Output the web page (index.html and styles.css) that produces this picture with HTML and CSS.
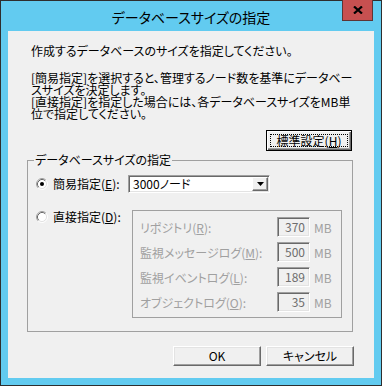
FILE: index.html
```html
<!DOCTYPE html>
<html lang="ja">
<head>
	<meta charset="UTF-8">
	<title>データベースサイズの指定</title>
	<link rel="stylesheet" href="styles.css">
</head>
<body>
	<div class="window">
		<div class="titlebar">
			<span class="title">データベースサイズの指定</span>
			<button class="close-btn">
				<svg width="10" height="8" viewBox="0 0 10 8"><path d="M1 0.5L9 7.5M9 0.5L1 7.5" stroke="#000" stroke-width="2.2"/></svg>
			</button>
		</div>
		<div class="client">
			<p class="msg msg-first">作成するデータベースのサイズを指定してください。</p>
			<p class="msg">[簡易指定]を選択すると、管理するノード数を基準にデータベー<br>スサイズを決定します。<br>[直接指定]を指定した場合には、各データベースサイズをMB単<br>位で指定してください。</p>
			<button class="btn btn-default"><span class="focus-rect">標準設定(<u>H</u>)</span></button>

			<fieldset class="group">
				<legend>データベースサイズの指定</legend>
				<div class="opt-row opt-simple">
					<label class="radio">
						<svg width="12" height="12" viewBox="0 0 12 12">
							<circle cx="6" cy="6" r="4.5" fill="#fff"/>
							<path d="M2.11 9.89A5.5 5.5 0 0 1 9.89 2.11" fill="none" stroke="#a0a0a0"/>
							<path d="M9.89 2.11A5.5 5.5 0 0 1 2.11 9.89" fill="none" stroke="#fff"/>
							<path d="M2.82 9.18A4.5 4.5 0 0 1 9.18 2.82" fill="none" stroke="#696969"/>
							<path d="M9.18 2.82A4.5 4.5 0 0 1 2.82 9.18" fill="none" stroke="#e3e3e3"/>
							<circle cx="6" cy="6" r="2" fill="#000"/>
						</svg>
						<span>簡易指定(<u>E</u>):</span>
					</label>
					<div class="combo">
						<span class="combo-value">3000ノード</span>
						<span class="combo-btn"><svg width="7" height="4" viewBox="0 0 7 4"><polygon points="0,0 7,0 3.5,4" fill="#000"/></svg></span>
					</div>
				</div>
				<div class="opt-row opt-direct">
					<label class="radio">
						<svg width="12" height="12" viewBox="0 0 12 12">
							<circle cx="6" cy="6" r="4.5" fill="#fff"/>
							<path d="M2.11 9.89A5.5 5.5 0 0 1 9.89 2.11" fill="none" stroke="#a0a0a0"/>
							<path d="M9.89 2.11A5.5 5.5 0 0 1 2.11 9.89" fill="none" stroke="#fff"/>
							<path d="M2.82 9.18A4.5 4.5 0 0 1 9.18 2.82" fill="none" stroke="#696969"/>
							<path d="M9.18 2.82A4.5 4.5 0 0 1 2.82 9.18" fill="none" stroke="#e3e3e3"/>
						</svg>
						<span>直接指定(<u>D</u>):</span>
					</label>
					<div class="detail">
						<div class="size-row"><span class="size-label">リポジトリ(<u>R</u>):</span><span class="num">370</span><span class="unit">MB</span></div>
						<div class="size-row"><span class="size-label">監視メッセージログ(<u>M</u>):</span><span class="num">500</span><span class="unit">MB</span></div>
						<div class="size-row"><span class="size-label">監視イベントログ(<u>L</u>):</span><span class="num">189</span><span class="unit">MB</span></div>
						<div class="size-row"><span class="size-label">オブジェクトログ(<u>O</u>):</span><span class="num">35</span><span class="unit">MB</span></div>
					</div>
				</div>
			</fieldset>

			<div class="actions">
				<button class="btn">OK</button>
				<button class="btn">キャンセル</button>
			</div>
		</div>
	</div>
</body>
</html>
```
FILE: styles.css
```css
*{
	margin: 0;
	padding: 0;
	box-sizing: border-box;
}
body{
	font-family: "Noto Sans CJK JP", "Noto Sans", sans-serif;
	font-size: 12px;
	font-feature-settings: "palt" 1;
	color: #000;
	background: #f0f0f0;
}
.window{
	width: 382px;
	height: 386px;
	border: 1px solid #2e2e2e;
	background-color: #62cbf0;
	padding: 0 7px 7px;
	display: flex;
	flex-direction: column;
}
.titlebar{
	height: 30px;
	flex: none;
	display: flex;
	align-items: center;
	justify-content: center;
	position: relative;
}
.title{
	font-size: 14px;
	line-height: 16px;
	margin-top: 1px;
}
.close-btn{
	position: absolute;
	top: -1px;
	right: 1px;
	width: 31px;
	height: 21px;
	background-color: #c75050;
	border: 1px solid #5e3434;
	border-top: none;
	display: flex;
	align-items: center;
	justify-content: center;
}
.client{
	flex: 1;
	background-color: #f0f0f0;
	display: flex;
	flex-direction: column;
	padding-top: 14px;
}
.msg{
	margin-left: 23px;
	line-height: 12px;
	white-space: nowrap;
}
.msg-first{
	margin-bottom: 15px;
}
.btn{
	font: inherit;
	font-feature-settings: "palt" 1;
	width: 88px;
	height: 20px;
	line-height: 16px;
	background-color: #f0f0f0;
	border: 1px solid;
	border-color: #fff #696969 #696969 #fff;
	box-shadow: inset -1px -1px #a0a0a0, inset 1px 1px #e3e3e3;
	color: #000;
}
.btn-default{
	align-self: flex-start;
	margin: 10px 0 0 258px;
	width: 86px;
	height: 21px;
	border: 1px solid #000;
	box-shadow: inset 1px 1px #fff, inset -1px -1px #696969, inset -2px -2px #a0a0a0;
	padding: 3px;
}
.focus-rect{
	display: block;
	height: 100%;
	border: 1px dotted #000;
	line-height: 11px;
}
.group{
	margin: 3px 0 0 19px;
	width: 326px;
	border: 1px solid #a0a0a0;
	padding: 9px 10px 13px 8px;
}
.group legend{
	margin-left: -2px;
	padding: 0 1px;
	line-height: 12px;
}
.opt-row{
	display: flex;
}
.opt-simple{
	align-items: center;
	height: 18px;
}
.opt-direct{
	margin-top: 17px;
	align-items: flex-start;
}
.radio{
	width: 92px;
	display: flex;
	align-items: center;
	gap: 5px;
	line-height: 14px;
}
.radio svg{
	flex: none;
}
.combo{
	width: 142px;
	height: 18px;
	background-color: #fff;
	border: 1px solid;
	border-color: #a0a0a0 #fff #fff #a0a0a0;
	box-shadow: inset 1px 1px #696969, inset -1px -1px #e3e3e3;
	display: flex;
	align-items: center;
	padding: 1px 1px 1px 4px;
}
.combo-value{
	flex: 1;
	line-height: 14px;
}
.combo-btn{
	width: 16px;
	height: 14px;
	background-color: #f0f0f0;
	border: 1px solid;
	border-color: #fff #696969 #696969 #fff;
	box-shadow: inset -1px -1px #a0a0a0;
	display: flex;
	align-items: center;
	justify-content: center;
}
.detail{
	margin-left: 4px;
	width: 210px;
	border: 1px solid #a0a0a0;
	padding: 6px 0 5px 7px;
	color: #a0a0a0;
}
.size-row{
	display: flex;
	align-items: center;
	height: 20px;
}
.size-row + .size-row{
	margin-top: 5px;
}
.size-label{
	width: 137px;
}
.num{
	width: 33px;
	height: 20px;
	border: 1px solid;
	border-color: #a0a0a0 #fff #fff #a0a0a0;
	box-shadow: inset 1px 1px #696969, inset -1px -1px #e3e3e3;
	text-align: right;
	padding: 0 4px;
	line-height: 17px;
	color: #6d6d6d;
}
.unit{
	margin-left: 4px;
}
.actions{
	display: flex;
	justify-content: flex-end;
	gap: 5px;
	margin-top: 14px;
	padding-right: 20px;
}
```
